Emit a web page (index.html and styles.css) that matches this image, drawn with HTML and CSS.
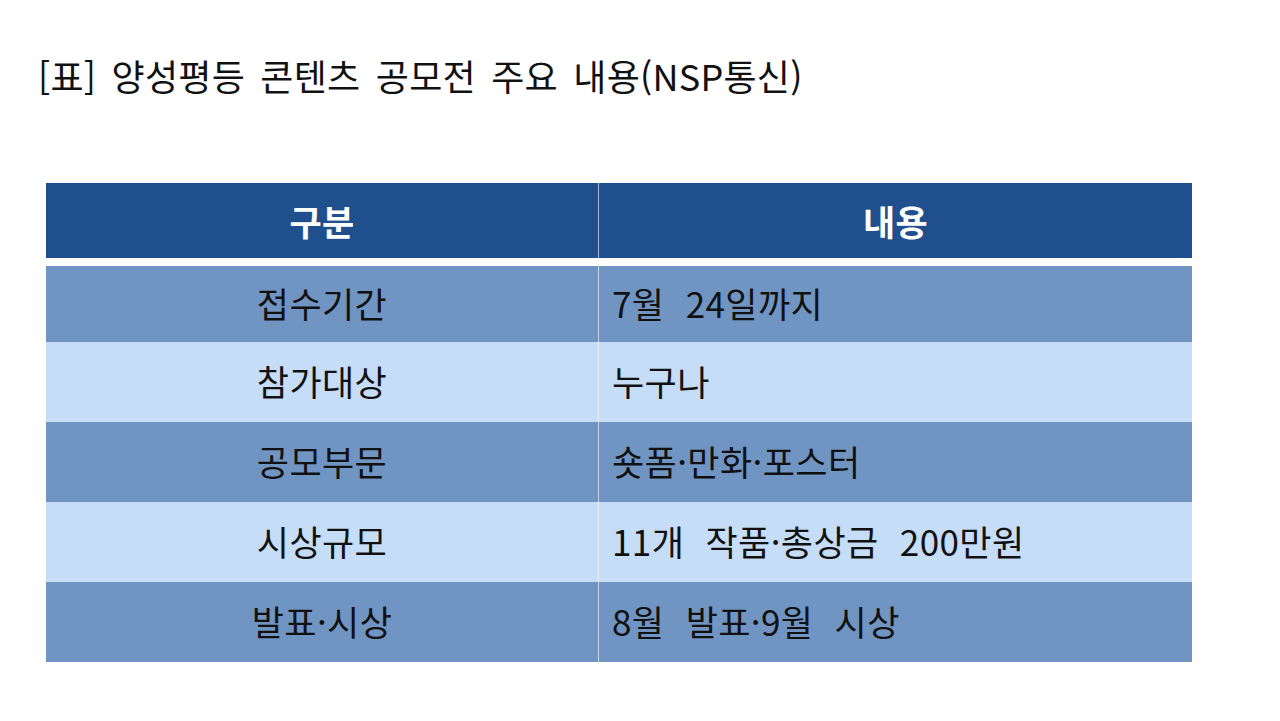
FILE: index.html
```html
<!DOCTYPE html>
<html lang="ko">
<head>
<meta charset="utf-8">
<title>양성평등 콘텐츠 공모전 주요 내용</title>
<link rel="stylesheet" href="styles.css">
</head>
<body>
<main class="page">
  <h1 class="title">[표] 양성평등 콘텐츠 공모전 주요 내용(NSP통신)</h1>
  <div class="table">
    <div class="row head">
      <div class="cell c1">구분</div>
      <div class="cell c2">내용</div>
    </div>
    <div class="row dark first">
      <div class="cell c1">접수기간</div>
      <div class="cell c2">7월 24일까지</div>
    </div>
    <div class="row light">
      <div class="cell c1">참가대상</div>
      <div class="cell c2">누구나</div>
    </div>
    <div class="row dark">
      <div class="cell c1">공모부문</div>
      <div class="cell c2">숏폼·만화·포스터</div>
    </div>
    <div class="row light">
      <div class="cell c1">시상규모</div>
      <div class="cell c2">11개 작품·총상금 200만원</div>
    </div>
    <div class="row dark">
      <div class="cell c1">발표·시상</div>
      <div class="cell c2">8월 발표·9월 시상</div>
    </div>
  </div>
</main>
</body>
</html>
```
FILE: styles.css
```css
html, body {
  margin: 0;
  padding: 0;
  background: #ffffff;
}
body {
  font-family: "Noto Sans CJK KR", "Noto Sans", sans-serif;
  color: #111111;
}
.page {
  width: 1280px;
  height: 721px;
  overflow: hidden;
}
.title {
  margin: 0;
  padding: 52px 0 0 38px;
  height: 46px;
  font-size: 36px;
  line-height: 46px;
  font-weight: 400;
  color: #111111;
  letter-spacing: 0.25px;
  word-spacing: 5px;
}
.table {
  margin: 85px 0 0 46px;
  width: 1146px;
  display: flex;
  flex-direction: column;
}
.row {
  display: grid;
  grid-template-columns: 552px 594px;
  height: 80px;
}
.row.head {
  height: 75px;
  background: #1f4f8d;
  margin-bottom: 8px;
}
.row.first {
  height: 76px;
}
.row.dark {
  background: #7095c3;
}
.row.light {
  background: #c6ddf8;
}
.cell {
  display: flex;
  align-items: center;
  font-size: 35px;
  line-height: 1;
  letter-spacing: 0.4px;
  word-spacing: 11px;
  padding-bottom: 4px;
  box-sizing: border-box;
}
.c1 {
  justify-content: center;
}
.c2 {
  border-left: 1px solid rgba(255, 255, 255, 0.6);
  padding-left: 13px;
}
.head .cell {
  justify-content: center;
  color: #ffffff;
  font-weight: 700;
  font-size: 35px;
  padding: 0;
}
```
